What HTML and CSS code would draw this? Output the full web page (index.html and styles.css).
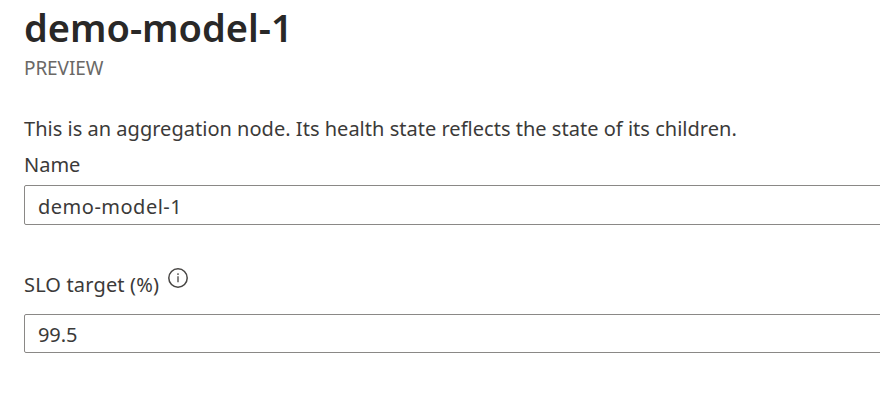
FILE: index.html
```html
<!DOCTYPE html>
<html lang="en">
<head>
<meta charset="utf-8">
<title>demo-model-1</title>
<link rel="stylesheet" href="styles.css">
</head>
<body>
<main class="panel">
  <h1 class="title"><span class="title-text">demo-model-1</span></h1>
  <div class="subtitle"><span class="subtitle-text">PREVIEW</span></div>
  <p class="description"><span class="description-text">This is an aggregation node. Its health state reflects the state of its children.</span></p>
  <div class="label name-label"><span class="name-label-text">Name</span></div>
  <div class="field name-field"><span class="name-value">demo-model-1</span></div>
  <div class="label slo-label"><span class="slo-label-text">SLO target (%)</span>
    <svg class="info" viewBox="0 0 22 22" width="22" height="22" fill="none" stroke="#484644" stroke-width="1.5"><circle cx="11" cy="11" r="9.2"/><path d="M11 9.3v6M11 6.3v1.6" stroke-width="1.3"/></svg>
  </div>
  <div class="field slo-field"><span class="slo-value">99.5</span></div>
</main>
</body>
</html>
```
FILE: styles.css
```css
* { box-sizing: border-box; }
body { margin: 0; background: #fff; color: #3b3a39; font-family: "Noto Sans", sans-serif; overflow: hidden; }
.panel { width: 920px; height: 414px; padding-left: 24px; white-space: nowrap; }
.title { margin: 0; height: 56px; font-size: 38px; font-weight: 600; line-height: 54px; color: #292827; }
.subtitle { height: 25px; line-height: 25px; font-size: 19px; letter-spacing: -0.1px; color: #6a6866; }
.description { margin: 33px 0 0; height: 32px; line-height: 30px; font-size: 20px; letter-spacing: 0.02px; }
.label { font-size: 20px; display: flex; }
.name-label { height: 39px; line-height: 38px; }
.field { border: 1px solid #8a8886; border-radius: 2px; padding-left: 13px; font-size: 20px; }
.name-field { height: 40px; line-height: 41px; }
.name-value { letter-spacing: 0.5px; }
.slo-label { margin-top: 40px; height: 49px; line-height: 40px; }
.slo-label-text { letter-spacing: 0.15px; }
.info { margin: 2px 0 0 8px; }
.slo-field { height: 39px; line-height: 40px; }
.slo-value { letter-spacing: -0.1px; }
```
